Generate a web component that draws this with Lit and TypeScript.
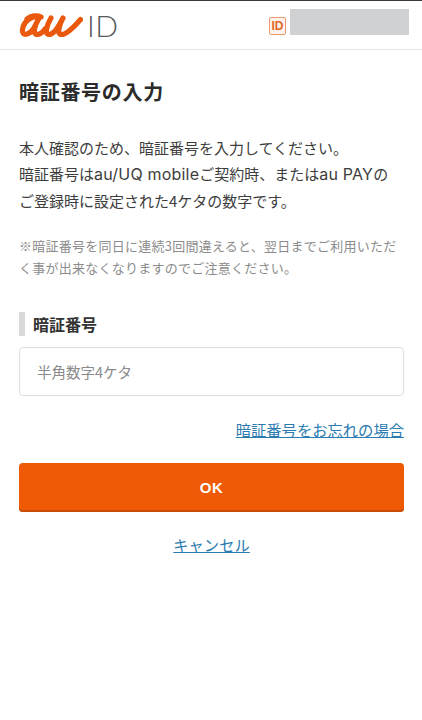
import { LitElement, html, css } from "lit";
import { customElement } from "lit/decorators.js";

@customElement("app-root")
export class AppRoot extends LitElement {
  static styles = css`
    :host {
      display: block;
      width: 422px;
      height: 720px;
      background: #fff;
      overflow: hidden;
      font-family: "Noto Sans CJK JP", "Noto Sans", sans-serif;
      color: #333;
    }
    .top { height: 1px; background: #3a3a3a; }
    header {
      height: 49px;
      box-sizing: border-box;
      border-bottom: 1px solid #e6e6e6;
      padding: 0 13px 0 19px;
      display: flex;
      align-items: center;
      justify-content: space-between;
    }
    .logo { display: flex; align-items: center; gap: 4px; }
    .logo svg { width: 64px; height: 26px; display: block; }
    .logo span {
      font-family: "Lato", "Open Sans", sans-serif;
      font-size: 30px;
      font-weight: 300;
      color: #55585a;
      line-height: 28px;
      letter-spacing: 0.5px;
    }
    .user { display: flex; align-items: flex-start; gap: 4px; margin-top: -7px; }
    .badge {
      width: 17px;
      height: 18px;
      box-sizing: border-box;
      margin-top: 8px;
      border: 1px solid #eb9a6c;
      border-radius: 2px;
      background: #fdf3ec;
      color: #e2672a;
      font: 700 12px/16px "Liberation Sans", sans-serif;
      text-align: center;
    }
    .masked { width: 119px; height: 26px; background: #d0d1d3; }
    main { padding: 27px 18px 0 19px; }
    h1 {
      margin: 0;
      font-size: 20px;
      line-height: 30px;
      font-weight: 700;
      letter-spacing: 0.7px;
      color: #2b2b2b;
    }
    .lead {
      margin: 28px 0 0;
      font-size: 15px;
      line-height: 26.4px;
      color: #3d3d3d;
      white-space: nowrap;
    }
    .latin {
      font-family: "Inter", sans-serif;
      font-size: 16px;
      line-height: 1;
      letter-spacing: 0.2px;
    }
    .note {
      margin: 20.5px 0 0;
      font-size: 13px;
      line-height: 22px;
      letter-spacing: 0.25px;
      color: #8c8c8c;
    }
    .label {
      margin-top: 33.5px;
      display: flex;
      align-items: center;
      gap: 8px;
      font-size: 16px;
      line-height: 24px;
      font-weight: 700;
      color: #333;
    }
    .label::before {
      content: "";
      width: 6px;
      height: 24px;
      background: #d9d9d9;
    }
    input {
      display: block;
      width: 100%;
      height: 49px;
      box-sizing: border-box;
      margin-top: 11px;
      padding: 0 17px;
      border: 1px solid #dedede;
      border-radius: 4px;
      font: 14.5px "Noto Sans CJK JP", sans-serif;
      background: #fff;
      outline: none;
    }
    input::placeholder { color: #8a8a8a; opacity: 1; }
    .forgot { margin-top: 20px; text-align: right; line-height: 26px; }
    a {
      color: #2b7bb0;
      font-size: 15.3px;
      text-decoration: underline;
    }
    button {
      display: block;
      width: 100%;
      height: 49px;
      margin-top: 21px;
      border: none;
      border-radius: 4px;
      background: #ee5a05;
      box-shadow: inset 0 -2px 0 #c94c08;
      color: #fff;
      font: 700 15px "Liberation Sans", sans-serif;
      letter-spacing: 0.5px;
    }
    .cancel { margin-top: 19px; text-align: center; line-height: 26px; }
  `;

  render() {
    return html`
      <div class="top"></div>
      <header>
        <div class="logo">
          <svg viewBox="0 0 64 26" fill="none" stroke="#e9580c" stroke-linecap="round" stroke-linejoin="round">
            <path stroke-width="5.2" d="M8 7 C12 3.5 18 3 22 5 M22 5 C13 2 4 10 3.5 18 C3 24.5 10 23.5 15 16 L20 6 C16 13 13 22 18 22.5 C21 22.5 24 20 26 17" />
            <path stroke-width="5.2" d="M32 6 C28 13 25 22 30 22.5 C35 22.5 40 14 44 6 C40 13 38 22 42 22.5 C47 23 55 15 61.5 7.5" />
          </svg>
          <span>ID</span>
        </div>
        <div class="user">
          <div class="badge">ID</div>
          <div class="masked"></div>
        </div>
      </header>
      <main>
        <h1>暗証番号の入力</h1>
        <p class="lead">本人確認のため、暗証番号を入力してください。<br />暗証番号は<span class="latin">au/UQ mobile</span>ご契約時、または<span class="latin">au PAY</span>の<br />ご登録時に設定された4ケタの数字です。</p>
        <p class="note">※暗証番号を同日に連続3回間違えると、翌日までご利用いただく事が出来なくなりますのでご注意ください。</p>
        <div class="label">暗証番号</div>
        <input type="text" placeholder="半角数字4ケタ" />
        <div class="forgot"><a href="#">暗証番号をお忘れの場合</a></div>
        <button>OK</button>
        <div class="cancel"><a href="#">キャンセル</a></div>
      </main>
    `;
  }
}
